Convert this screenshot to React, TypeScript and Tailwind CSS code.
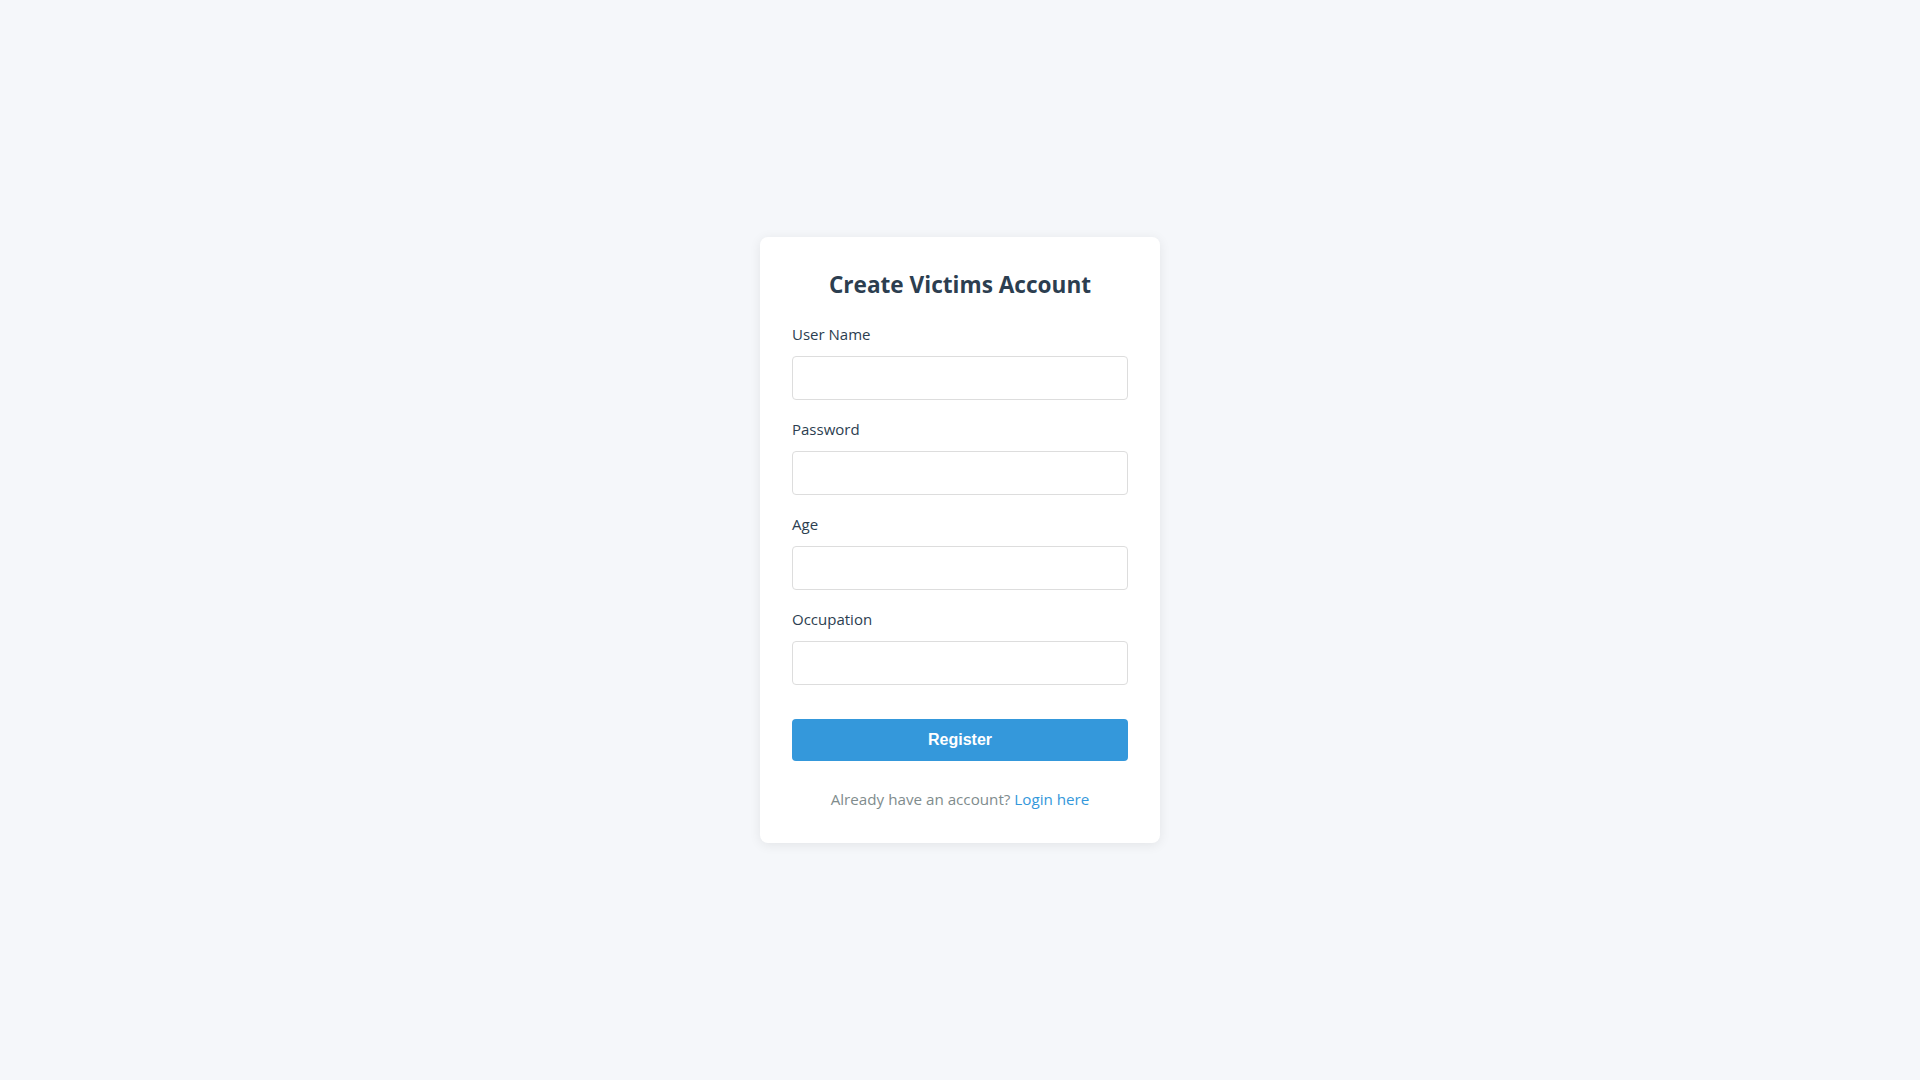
import { useState } from 'react'

const FIELDS = [
  { id: 'username', label: 'User Name', type: 'text' },
  { id: 'password', label: 'Password', type: 'password' },
  { id: 'age', label: 'Age', type: 'number' },
  { id: 'occupation', label: 'Occupation', type: 'text' },
]

export default function App() {
  const [values, setValues] = useState<Record<string, string>>({})

  return (
    <div className="min-h-screen bg-[#f5f7fa] flex items-center justify-center font-['Open_Sans',sans-serif]">
      <div className="w-[400px] bg-white rounded-lg p-8 shadow-[0_2px_12px_rgba(0,0,0,0.08)]">
        <h2 className="text-center text-[22.6px] leading-8 font-bold text-[#2c3e50] mb-[21px]">
          Create Victims Account
        </h2>

        <form onSubmit={e => e.preventDefault()}>
          {FIELDS.map(f => (
            <div key={f.id} className="mb-[17px]">
              <label htmlFor={f.id} className="block text-[15px] leading-6 text-[#2c3e50] mb-[10px]">
                {f.label}
              </label>
              <input
                id={f.id}
                type={f.type}
                value={values[f.id] ?? ''}
                onChange={e => setValues({ ...values, [f.id]: e.target.value })}
                className="block w-full h-[44px] px-3 border border-[#dddddd] rounded bg-white text-base focus:outline-none focus:border-[#3498db]"
              />
            </div>
          ))}

          <button
            type="submit"
            className="mt-[17px] w-full h-[42px] rounded bg-[#3498db] hover:bg-[#2980b9] text-white font-bold text-base font-['Liberation_Sans',Arial,sans-serif]"
          >
            Register
          </button>
        </form>

        <p className="mt-[26px] text-center text-[15.2px] leading-6 text-[#7f8c8d]">
          Already have an account?{' '}
          <a href="#" className="text-[#3498db] hover:underline">
            Login here
          </a>
        </p>
      </div>
    </div>
  )
}
